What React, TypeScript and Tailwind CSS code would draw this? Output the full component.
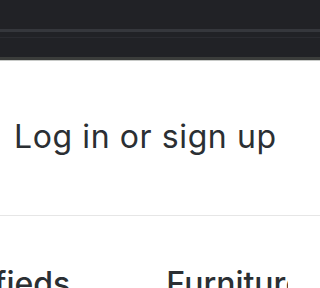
import React from "react";

export default function App() {
  return (
    <div className="w-full h-[288px] overflow-hidden bg-white" style={{ fontFamily: "Inter, Lato, sans-serif" }}>
      <div className="h-[57px] bg-[#212226] flex flex-col">
        <div className="h-[29px]" />
        <div className="h-[3px] bg-[#35373c]" />
        <div className="h-[5px]" />
        <div className="h-[1px] bg-[#2a2b30]" />
      </div>
      <div className="h-[3px] bg-[#3b3d3b]" />
      <div className="h-[1px] bg-[#c8cac8]" />
      <div className="h-[154px] flex items-center">
        <h2 className="pl-[14px] text-[32px] leading-none tracking-[0.6px] text-[#2b2f33] font-normal whitespace-nowrap mt-[-3px]">Log in or sign up</h2>
      </div>
      <div className="h-[1px] bg-[#e6e6e6]" />
      <div className="w-[288px] overflow-hidden">
        <div className="flex gap-[96px] pt-[52px] -ml-[98px] whitespace-nowrap">
          <span className="text-[32px] leading-none font-medium text-[#2b2f33]">Classifieds</span>
          <span className="text-[32px] leading-none font-medium text-[#2b2f33]">Furniture</span>
        </div>
      </div>
    </div>
  );
}
